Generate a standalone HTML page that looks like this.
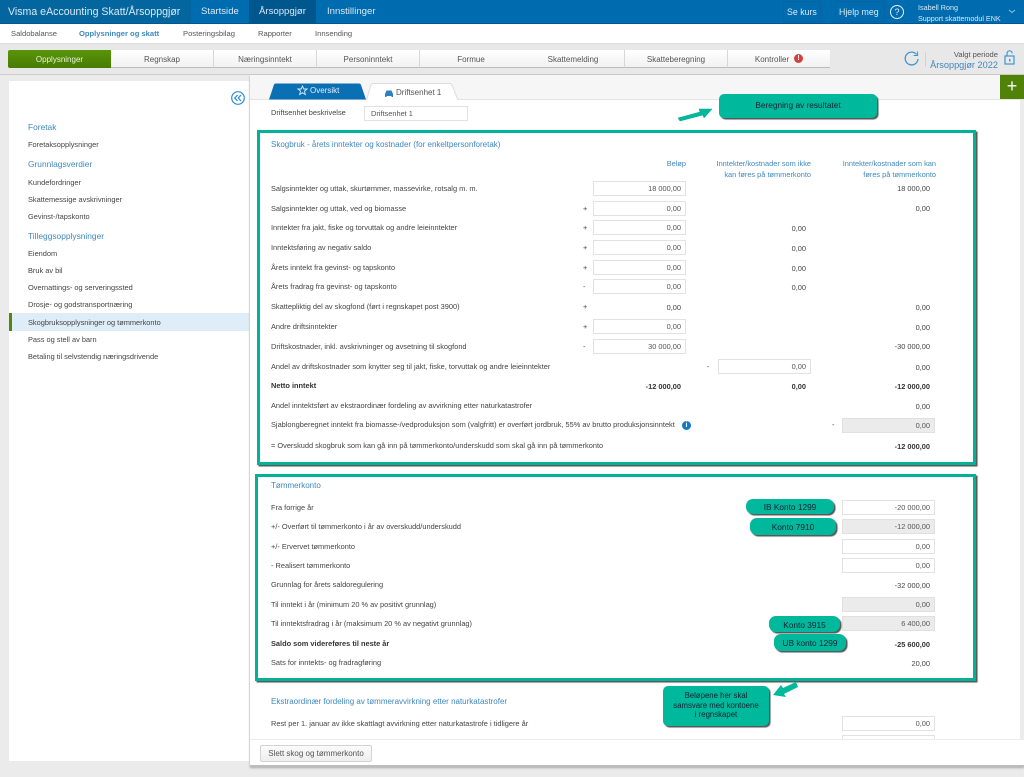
<!DOCTYPE html>
<html lang="no"><head><meta charset="utf-8"><title>Visma eAccounting Skatt/Årsoppgjør</title>
<style>
html{background:#ebebeb}
html,body{margin:0;padding:0;width:1024px;height:777px;overflow:hidden}
body{position:relative;font-family:"Liberation Sans",sans-serif;font-size:7.4px;color:#444;filter:blur(.3px);background:#ebebeb}
div,span.a{position:absolute;box-sizing:border-box}
.t{white-space:nowrap;line-height:12px;height:12px;margin-top:1px}
.r{text-align:right}
.b{color:#3f88bd}
.in{background:#fff;border:1px solid #e2e2e2;text-align:right;padding-right:4px;line-height:13px;height:15px;color:#555}
.gr{background:#ebebeb;border-color:#e0e0e0}
.m{font-weight:bold;color:#333}
.tab{top:50px;height:18px;width:103px;background:linear-gradient(#fff,#f1f1f1);border-right:1px solid #d8d8d8;border-bottom:1px solid #bbb;text-align:center;line-height:19px;color:#555;font-size:8px}
.side{left:28px;color:#444;white-space:nowrap;line-height:12px;font-size:7.4px}
.sh{left:28px;color:#3f88bd;white-space:nowrap;line-height:12px;font-size:8.4px}
.box{border:3px solid #00b398;box-shadow:1.5px 1.5px 1px #555;background:#fff}
.pill{background:#00b89b;border-radius:5px;box-shadow:1.5px 1.5px 1px #555;color:#123;font-size:8.300px;text-align:center;white-space:nowrap}
.top{color:#dbe9f4;top:0;line-height:23px;white-space:nowrap;font-size:10.5px}
.sub{top:25px;line-height:18px;color:#555;white-space:nowrap;font-size:7.6px}
</style></head><body>

<!-- top bar -->
<div style="left:0;top:0;width:1024px;height:24px;background:#006cb0;border-bottom:1px solid #00568f"></div>
<div style="left:0;top:0;width:191px;height:23px;background:#04669f"></div>
<div style="left:249px;top:0;width:67px;height:23px;background:#00578e"></div>
<div class="top" style="left:8px;top:1px;font-size:10.6px">Visma eAccounting Skatt/Årsoppgjør</div>
<div class="top" style="left:201px;font-size:9.6px">Startside</div>
<div class="top" style="left:259px;font-size:9.6px">Årsoppgjør</div>
<div class="top" style="left:327px;font-size:9.6px">Innstillinger</div>
<div style="left:783px;top:1px;width:38px;height:21px;border:1px solid #0a62a0"></div>
<div style="left:835px;top:1px;width:50px;height:21px;border:1px solid #0a62a0"></div>
<div class="top" style="left:787px;top:1px;font-size:8.800px">Se kurs</div>
<div class="top" style="left:839px;top:1px;font-size:8.800px">Hjelp meg</div>
<div style="left:890px;top:5px;width:14px;height:14px;border:1px solid #e6f0f7;border-radius:50%;color:#e6f0f7;text-align:center;font-size:9px;line-height:12px">?</div>
<div class="t" style="left:918px;top:1px;color:#dbe9f4;font-size:7.2px">Isabell Rong</div>
<div class="t" style="left:918px;top:12px;color:#dbe9f4;font-size:7.2px">Support skattemodul ENK</div>
<svg style="position:absolute;left:1008px;top:9px" width="8" height="5"><path d="M1 1l3 2.5L7 1" fill="none" stroke="#9cc3de" stroke-width="1"/></svg>

<!-- sub nav -->
<div style="left:0;top:24px;width:1024px;height:19px;background:#fff"></div>
<div class="sub" style="left:11px">Saldobalanse</div>
<div class="sub" style="left:79px;color:#3f88bd;font-weight:bold">Opplysninger og skatt</div>
<div class="sub" style="left:183px">Posteringsbilag</div>
<div class="sub" style="left:258px">Rapporter</div>
<div class="sub" style="left:315px">Innsending</div>

<!-- tab strip -->
<div style="left:0;top:43px;width:1024px;height:32px;background:#e8e8e8;border-top:1px solid #ddd;border-bottom:1px solid #ccc"></div>
<div class="tab" style="left:8px;width:103px;background:linear-gradient(#5a9409,#477c02);color:#e8f2da;border:none;border-radius:2px 0 0 2px">Opplysninger</div>
<div class="tab" style="left:111px">Regnskap</div>
<div class="tab" style="left:214px">Næringsinntekt</div>
<div class="tab" style="left:317px">Personinntekt</div>
<div class="tab" style="left:420px">Formue</div>
<div class="tab" style="left:522px">Skattemelding</div>
<div class="tab" style="left:625px">Skatteberegning</div>
<div class="tab" style="left:728px;width:102px;border-right:none;padding-right:14px">Kontroller</div>
<div style="left:794px;top:54px;width:9px;height:9px;border-radius:50%;background:#d2403f;color:#fff;font-size:7px;font-weight:bold;text-align:center;line-height:9px">!</div>
<svg style="position:absolute;left:903px;top:50px" width="17" height="17" viewBox="0 0 17 17"><path d="M13.6 4.5A6.4 6.4 0 1 0 15 9" fill="none" stroke="#3d96d6" stroke-width="1.3"/><path d="M14.6 1.5v4h-4" fill="none" stroke="#3d96d6" stroke-width="1"/></svg>
<div style="left:925px;top:52px;width:1px;height:15px;background:#d4d4d4"></div>
<div class="t r" style="right:26px;top:48px;font-size:7.6px;color:#555">Valgt periode</div>
<div class="t r" style="right:26px;top:58px;font-size:9.2px;color:#3f88bd">Årsoppgjør 2022</div>
<svg style="position:absolute;left:1004px;top:50px" width="12" height="15" viewBox="0 0 12 15"><rect x="1" y="6" width="9" height="8" fill="none" stroke="#3d96d6" stroke-width="1.2"/><path d="M3 6V3.4a2.6 2.6 0 0 1 5.2 0" fill="none" stroke="#3d96d6" stroke-width="1.2"/><rect x="5" y="9" width="1.4" height="2.5" fill="#3d96d6"/></svg>

<!-- left panel -->
<div style="left:9px;top:81px;width:240px;height:680px;background:#fff"></div>
<svg style="position:absolute;left:231px;top:91px" width="14" height="14" viewBox="0 0 14 14"><circle cx="7" cy="7" r="6.300" fill="none" stroke="#2f8fd3" stroke-width="1.200"/><path d="M6.500 4L3.800 7l2.700 3M10 4L7.300 7l2.700 3" fill="none" stroke="#2f8fd3" stroke-width="1.300"/></svg>
<div class="sh" style="top:121px">Foretak</div>
<div class="side" style="top:139px">Foretaksopplysninger</div>
<div class="sh" style="top:158px">Grunnlagsverdier</div>
<div class="side" style="top:177px">Kundefordringer</div>
<div class="side" style="top:194px">Skattemessige avskrivninger</div>
<div class="side" style="top:211px">Gevinst-/tapskonto</div>
<div class="sh" style="top:230px">Tilleggsopplysninger</div>
<div class="side" style="top:248px">Eiendom</div>
<div class="side" style="top:265px">Bruk av bil</div>
<div class="side" style="top:282px">Overnattings- og serveringssted</div>
<div class="side" style="top:299px">Drosje- og godstransportnæring</div>
<div style="left:9px;top:313px;width:240px;height:18px;background:#deedf7;border-left:3px solid #4f8a0b"></div>
<div class="side" style="top:317px">Skogbruksopplysninger og tømmerkonto</div>
<div class="side" style="top:334px">Pass og stell av barn</div>
<div class="side" style="top:351px">Betaling til selvstendig næringsdrivende</div>

<!-- right panel -->
<div style="left:250px;top:75px;width:774px;height:692px;background:#fff;box-shadow:0 1px 2px #aaa"></div>
<div style="left:250px;top:75px;width:774px;height:25px;background:#f6f6f6;border-bottom:1px solid #e4e4e4"></div>
<div style="left:1000px;top:75px;width:24px;height:24px;background:#4f8207;color:#fff;text-align:center;font-size:18px;line-height:22px">+</div>
<div style="left:1020px;top:100px;width:4px;height:640px;background:#ececec"></div>
<svg style="position:absolute;left:268px;top:83px" width="100" height="17"><path d="M1 16.500L6 1.500Q6.500 .5 8 .5H91Q92.500 .5 93 2L98 16.500Z" fill="#0a6fb3"/></svg>
<svg style="position:absolute;left:366px;top:83px" width="96" height="17"><path d="M.5 17L5 2Q5.500 .5 7 .5H84Q85.500 .5 86 2L92 17" fill="#fff" stroke="#ddd"/></svg>
<svg style="position:absolute;left:297px;top:85px" width="11" height="11" viewBox="0 0 11 11"><path d="M5.500 1l1.300 3h3.200l-2.500 2.200.8 3.300-2.800-1.800-2.800 1.800.8-3.300L1 4h3.200z" fill="none" stroke="#dcecf7" stroke-width=".9"/></svg>
<div class="t" style="left:310px;top:84px;color:#e4f0f8;font-size:8px">Oversikt</div>
<svg style="position:absolute;left:384px;top:88px" width="10" height="10" viewBox="0 0 10 10"><path d="M1 9V6l1.500-3.500h5L9 6v3H7.500V8h-5v1z" fill="#2e7fc0"/></svg>
<div class="t" style="left:396px;top:86px;color:#555;font-size:8px">Driftsenhet 1</div>
<div class="t" style="left:271px;top:106px">Driftsenhet beskrivelse</div>
<div class="in" style="left:364px;top:106px;width:104px;text-align:left;padding-left:6px">Driftsenhet 1</div>

<!-- annotation top -->
<div class="pill" style="left:719px;top:94px;width:158px;height:24px;line-height:23px">Beregning av resultatet</div>
<svg style="position:absolute;left:676px;top:103px" width="40" height="20" viewBox="0 0 40 20"><path d="M2 15L24 9l-1-3 13 0-8 9-1-3L4 18Z" fill="#00b89b" stroke="#00a78d" stroke-width=".5"/></svg>

<!-- box 1 -->
<div class="box" style="left:257px;top:130px;width:719px;height:335px"></div>
<div class="t b" style="left:271px;top:138px;font-size:8px">Skogbruk - årets inntekter og kostnader (for enkeltpersonforetak)</div>
<div class="t b r" style="right:338px;top:157px">Beløp</div>
<div class="t b r" style="right:213px;top:158px;width:200px;line-height:10.500px;height:22px;white-space:normal">Inntekter/kostnader som ikke<br>kan føres på tømmerkonto</div>
<div class="t b r" style="right:88px;top:158px;width:200px;line-height:10.500px;height:22px;white-space:normal">Inntekter/kostnader som kan<br>føres på tømmerkonto</div>

<div class="t" style="left:271px;top:182px">Salgsinntekter og uttak, skurtømmer, massevirke, rotsalg m. m.</div>
<div class="in" style="left:593px;top:181px;width:93px">18 000,00</div>
<div class="t r" style="right:94px;top:182px">18 000,00</div>

<div class="t" style="left:271px;top:202px">Salgsinntekter og uttak, ved og biomasse</div>
<div class="t" style="left:583px;top:202px">+</div>
<div class="in" style="left:593px;top:201px;width:93px">0,00</div>
<div class="t r" style="right:94px;top:202px">0,00</div>

<div class="t" style="left:271px;top:221px">Inntekter fra jakt, fiske og torvuttak og andre leieinntekter</div>
<div class="t" style="left:583px;top:221px">+</div>
<div class="in" style="left:593px;top:220px;width:93px">0,00</div>
<div class="t r" style="right:218px;top:222px">0,00</div>

<div class="t" style="left:271px;top:241px">Inntektsføring av negativ saldo</div>
<div class="t" style="left:583px;top:241px">+</div>
<div class="in" style="left:593px;top:240px;width:93px">0,00</div>
<div class="t r" style="right:218px;top:242px">0,00</div>

<div class="t" style="left:271px;top:261px">Årets inntekt fra gevinst- og tapskonto</div>
<div class="t" style="left:583px;top:261px">+</div>
<div class="in" style="left:593px;top:260px;width:93px">0,00</div>
<div class="t r" style="right:218px;top:262px">0,00</div>

<div class="t" style="left:271px;top:280px">Årets fradrag fra gevinst- og tapskonto</div>
<div class="t" style="left:583px;top:280px">-</div>
<div class="in" style="left:593px;top:279px;width:93px">0,00</div>
<div class="t r" style="right:218px;top:281px">0,00</div>

<div class="t" style="left:271px;top:300px">Skattepliktig del av skogfond (ført i regnskapet post 3900)</div>
<div class="t" style="left:583px;top:300px">+</div>
<div class="t r" style="right:343px;top:301px">0,00</div>
<div class="t r" style="right:94px;top:301px">0,00</div>

<div class="t" style="left:271px;top:320px">Andre driftsinntekter</div>
<div class="t" style="left:583px;top:320px">+</div>
<div class="in" style="left:593px;top:319px;width:93px">0,00</div>
<div class="t r" style="right:94px;top:321px">0,00</div>

<div class="t" style="left:271px;top:340px">Driftskostnader, inkl. avskrivninger og avsetning til skogfond</div>
<div class="t" style="left:583px;top:340px">-</div>
<div class="in" style="left:593px;top:339px;width:93px">30 000,00</div>
<div class="t r" style="right:94px;top:340px">-30 000,00</div>

<div class="t" style="left:271px;top:360px">Andel av driftskostnader som knytter seg til jakt, fiske, torvuttak og andre leieinntekter</div>
<div class="t" style="left:707px;top:360px">-</div>
<div class="in" style="left:718px;top:359px;width:93px">0,00</div>
<div class="t r" style="right:94px;top:361px">0,00</div>

<div class="t m" style="left:271px;top:379px">Netto inntekt</div>
<div class="t r m" style="right:343px;top:380px">-12 000,00</div>
<div class="t r m" style="right:218px;top:380px">0,00</div>
<div class="t r m" style="right:94px;top:380px">-12 000,00</div>

<div class="t" style="left:271px;top:399px">Andel inntektsført av ekstraordinær fordeling av avvirkning etter naturkatastrofer</div>
<div class="t r" style="right:94px;top:400px">0,00</div>

<div class="t" style="left:271px;top:418px">Sjablongberegnet inntekt fra biomasse-/vedproduksjon som (valgfritt) er overført jordbruk, 55% av brutto produksjonsinntekt</div>
<div style="left:682px;top:421px;width:9px;height:9px;border-radius:50%;background:#1279c4;color:#fff;font-size:7px;font-weight:bold;text-align:center;line-height:9px">i</div>
<div class="t" style="left:832px;top:418px">-</div>
<div class="in gr" style="left:842px;top:418px;width:93px">0,00</div>

<div class="t" style="left:271px;top:439px">= Overskudd skogbruk som kan gå inn på tømmerkonto/underskudd som skal gå inn på tømmerkonto</div>
<div class="t r m" style="right:94px;top:440px">-12 000,00</div>

<!-- box 2 -->
<div class="box" style="left:255px;top:474px;width:721px;height:207px"></div>
<div class="t b" style="left:271px;top:479px;font-size:8px">Tømmerkonto</div>

<div class="t" style="left:271px;top:501px">Fra forrige år</div>
<div class="in" style="left:842px;top:500px;width:93px">-20 000,00</div>
<div class="t" style="left:271px;top:520px">+/- Overført til tømmerkonto i år av overskudd/underskudd</div>
<div class="in gr" style="left:842px;top:519px;width:93px">-12 000,00</div>
<div class="t" style="left:271px;top:540px">+/- Ervervet tømmerkonto</div>
<div class="in" style="left:842px;top:539px;width:93px">0,00</div>
<div class="t" style="left:271px;top:559px">- Realisert tømmerkonto</div>
<div class="in" style="left:842px;top:558px;width:93px">0,00</div>
<div class="t" style="left:271px;top:578px">Grunnlag for årets saldoregulering</div>
<div class="t r" style="right:94px;top:579px">-32 000,00</div>
<div class="t" style="left:271px;top:598px">Til inntekt i år (minimum 20 % av positivt grunnlag)</div>
<div class="in gr" style="left:842px;top:597px;width:93px">0,00</div>
<div class="t" style="left:271px;top:617px">Til inntektsfradrag i år (maksimum 20 % av negativt grunnlag)</div>
<div class="in gr" style="left:842px;top:616px;width:93px">6 400,00</div>
<div class="t m" style="left:271px;top:637px">Saldo som videreføres til neste år</div>
<div class="t r m" style="right:94px;top:638px">-25 600,00</div>
<div class="t" style="left:271px;top:656px">Sats for inntekts- og fradragføring</div>
<div class="t r" style="right:94px;top:657px">20,00</div>

<div class="pill" style="left:746px;top:499px;width:88px;height:15px;line-height:16px;border-radius:7px">IB Konto 1299</div>
<div class="pill" style="left:750px;top:518px;width:86px;height:17px;line-height:18px;border-radius:7px">Konto 7910</div>
<div class="pill" style="left:769px;top:616px;width:71px;height:16px;line-height:18px;border-radius:7px">Konto 3915</div>
<div class="pill" style="left:774px;top:634px;width:72px;height:17px;line-height:18px;border-radius:7px">UB konto 1299</div>

<!-- section 3 -->
<div class="t b" style="left:271px;top:695px;font-size:8px">Ekstraordinær fordeling av tømmeravvirkning etter naturkatastrofer</div>
<div class="t" style="left:271px;top:717px">Rest per 1. januar av ikke skattlagt avvirkning etter naturkatastrofe i tidligere år</div>
<div class="in" style="left:842px;top:716px;width:93px">0,00</div>
<div class="in" style="left:842px;top:735px;width:93px;height:8px"></div>

<div class="pill" style="left:663px;top:686px;width:106px;height:40px;padding-top:5px;line-height:9.700px;color:#123;font-size:7.800px;white-space:normal">Beløpene her skal<br>samsvare med kontoene<br>i regnskapet</div>
<svg style="position:absolute;left:771px;top:680px" width="28" height="20" viewBox="0 0 28 20"><path d="M25 2L12 8l-2-3-8 10 13 2-2-3L27 7Z" fill="#00b89b"/></svg>

<!-- footer -->
<div style="left:250px;top:739px;width:774px;height:28px;background:#fff;border-top:1px solid #ececec;border-bottom:2px solid #bdbdbd"></div>
<div style="left:260px;top:745px;width:112px;height:17px;background:linear-gradient(#fbfbfb,#eee);border:1px solid #d4d4d4;border-radius:2px;text-align:center;line-height:15px;color:#555;font-size:8px">Slett skog og tømmerkonto</div>
</body></html>
